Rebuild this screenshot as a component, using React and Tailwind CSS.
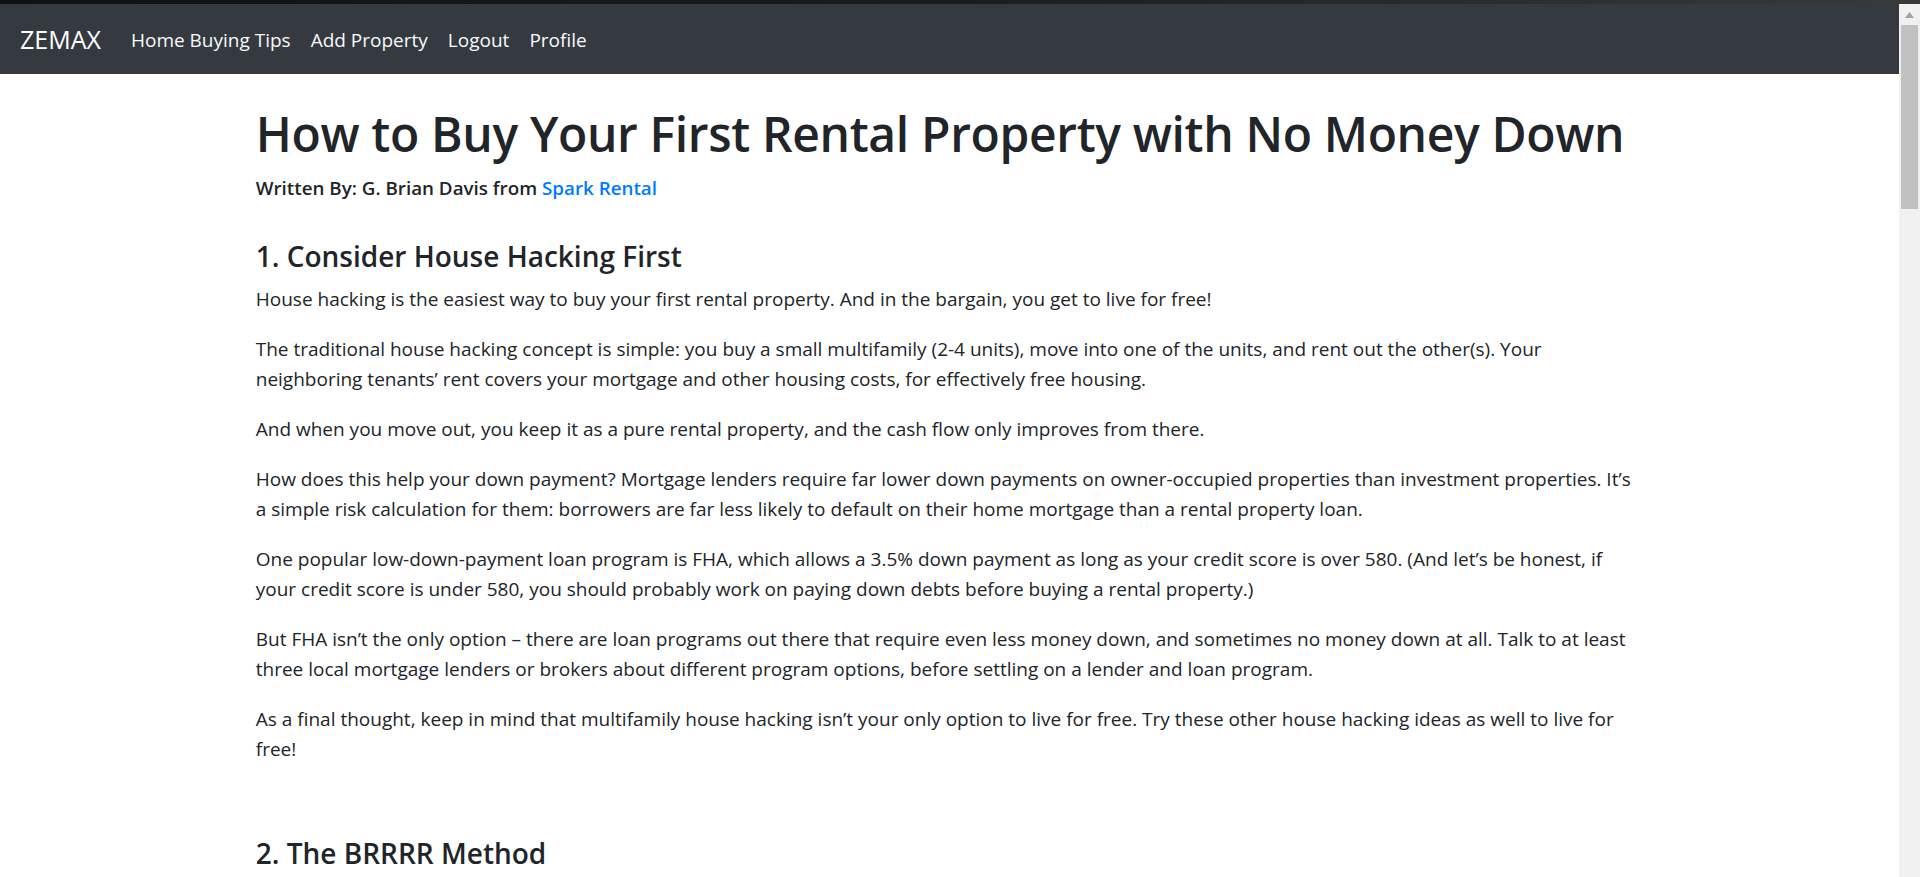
import React from "react";

const navLinks = ["Home Buying Tips", "Add Property", "Logout", "Profile"];

// each paragraph kept as its rendered lines so the wraps stay put
const sectionOne = [
  ["House hacking is the easiest way to buy your first rental property. And in the bargain, you get to live for free!"],
  [
    "The traditional house hacking concept is simple: you buy a small multifamily (2-4 units), move into one of the units, and rent out the other(s). Your",
    "neighboring tenants’ rent covers your mortgage and other housing costs, for effectively free housing.",
  ],
  ["And when you move out, you keep it as a pure rental property, and the cash flow only improves from there."],
  [
    "How does this help your down payment? Mortgage lenders require far lower down payments on owner-occupied properties than investment properties. It’s",
    "a simple risk calculation for them: borrowers are far less likely to default on their home mortgage than a rental property loan.",
  ],
  [
    "One popular low-down-payment loan program is FHA, which allows a 3.5% down payment as long as your credit score is over 580. (And let’s be honest, if",
    "your credit score is under 580, you should probably work on paying down debts before buying a rental property.)",
  ],
  [
    "But FHA isn’t the only option – there are loan programs out there that require even less money down, and sometimes no money down at all. Talk to at least",
    "three local mortgage lenders or brokers about different program options, before settling on a lender and loan program.",
  ],
  [
    "As a final thought, keep in mind that multifamily house hacking isn’t your only option to live for free. Try these other house hacking ideas as well to live for",
    "free!",
  ],
];

const Navbar = () => (
  <nav className="flex h-[70px] shrink-0 items-center bg-[#343a40] pl-[20px]">
    <span className="mr-[20px] text-[25px] leading-[37px] text-white">ZEMAX</span>
    {navLinks.map((link) => (
      <a key={link} href="#" className="px-[10px] pt-[1px] text-[19px] leading-[30px] text-[#f8f9fa]">
        {link}
      </a>
    ))}
  </nav>
);

const Scrollbar = () => (
  <div className="flex w-[21px] shrink-0 flex-col bg-[#f1f1f1]">
    <div className="flex h-[21px] items-center justify-center">
      <svg width="9" height="6" viewBox="0 0 9 6">
        <path d="M4.5 0 L9 6 L0 6 Z" fill="#a3a3a3" />
      </svg>
    </div>
    <div className="mx-[2px] h-[184px] bg-[#c1c1c1]" />
  </div>
);

const Paragraph = ({ lines }) => (
  <p className="mb-[20px] whitespace-nowrap text-[19px] leading-[30px]">
    {lines.map((line, i) => (
      <React.Fragment key={i}>
        {i > 0 && <br />}
        {line}
      </React.Fragment>
    ))}
  </p>
);

export default function App() {
  return (
    <div className="flex h-[877px] flex-col overflow-hidden bg-white font-['Open_Sans',sans-serif] text-[#212529]">
      <div className="h-[4px] shrink-0 bg-gradient-to-r from-[#111] via-[#1c1c1c] to-[#3a3a3a]" />
      <div className="flex min-h-0 flex-1">
        <div className="flex min-w-0 flex-1 flex-col">
          <Navbar />
          <main className="mx-auto w-[1425px] px-[18.75px]">
            <h1 className="mt-[30px] mb-[8.5px] whitespace-nowrap text-[48px] font-[560] leading-[60px] tracking-[-0.35px]">
              How to Buy Your First Rental Property with No Money Down
            </h1>
            <p className="text-[18.8px] font-semibold leading-[30px]">
              Written By: G. Brian Davis from{" "}
              <a href="#" className="text-[#007bff]">
                Spark Rental
              </a>
            </p>

            <h4 className="mt-[35.5px] mb-[10px] text-[28px] font-[560] leading-[36px]">1. Consider House Hacking First</h4>
            {sectionOne.map((lines, i) => (
              <Paragraph key={i} lines={lines} />
            ))}

            <h4 className="mt-[71px] mb-[10px] text-[28px] font-[560] leading-[36px]">2. The BRRRR Method</h4>
            <Paragraph lines={["The BRRRR method stands for buy, renovate, rent, refinance, repeat."]} />
          </main>
        </div>
        <Scrollbar />
      </div>
    </div>
  );
}
